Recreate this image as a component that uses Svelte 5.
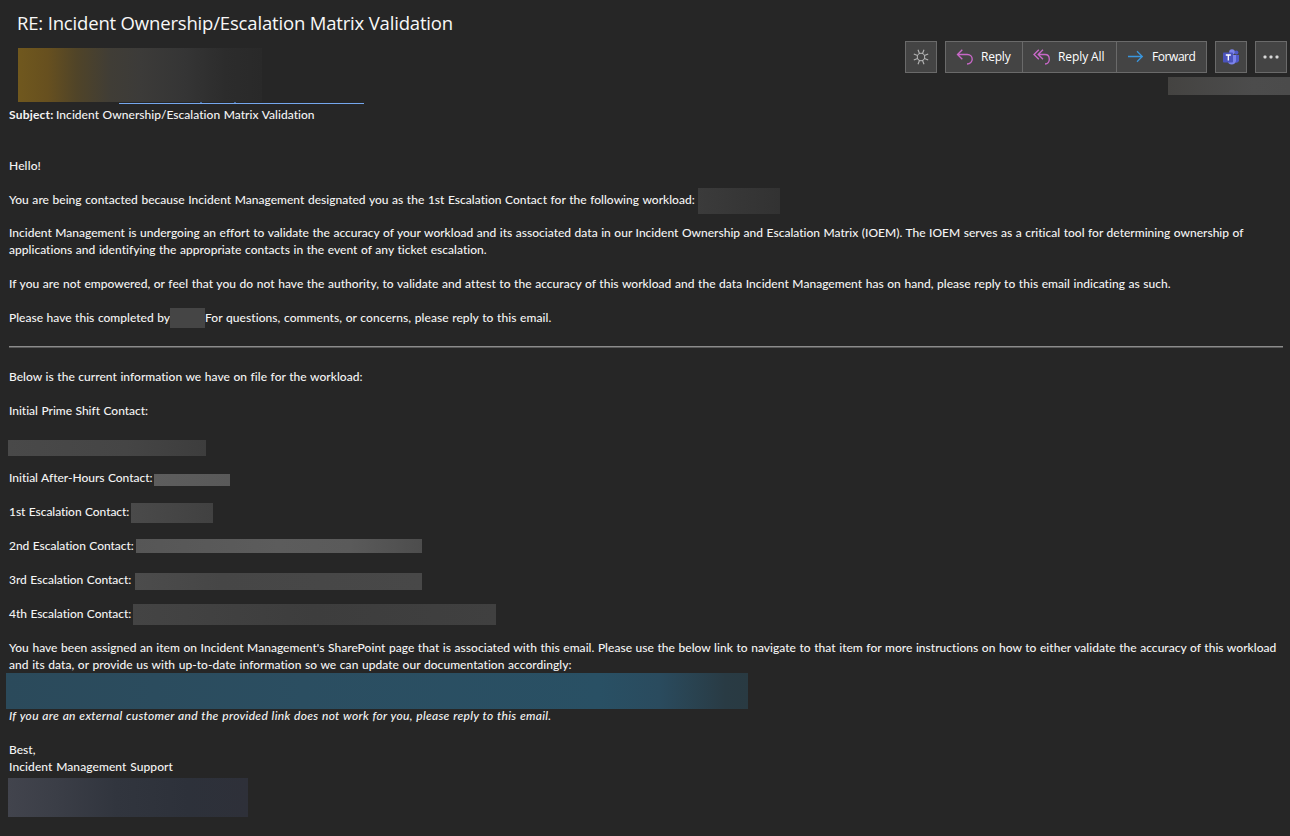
<script>
  const contacts = [
    { label: 'Initial After-Hours Contact:', w: 143.5, bar: 'b-after' },
    { label: '1st Escalation Contact:', w: 120.5, bar: 'b-first' },
    { label: '2nd Escalation Contact:', w: 125, bar: 'b-second' },
    { label: '3rd Escalation Contact:', w: 122.5, bar: 'b-third' },
    { label: '4th Escalation Contact:', w: 122.5, bar: 'b-fourth' }
  ];

  // Spreads the letters of a line so that it takes the given width.
  function fit(node, width) {
    const natural = node.getBoundingClientRect().width;
    node.style.letterSpacing = (width - natural) / node.textContent.length + 'px';
  }
</script>

<div class="mail">
  <header>
    <h1><span class="t" use:fit={436}>RE: Incident Ownership/Escalation Matrix Validation</span></h1>
    <div class="head">
      <div class="sender">
        <div class="person"></div>
        <div class="link"><i></i><i></i></div>
      </div>
      <div class="side">
        <div class="tools">
          <button class="sq" aria-label="Light mode">
            <svg width="18" height="18" viewBox="0 0 18 18" fill="none" stroke="#b4b4b4" stroke-width="1.1">
              <circle cx="9" cy="9" r="3.7" />
              <path d="M12.5 10.5l3.7 1.5M10.5 12.5l1.5 3.7M7.5 12.5L6 16.2M5.5 10.5L1.8 12M5.5 7.5L1.8 6M7.5 5.5L6 1.8M10.5 5.5L12 1.8M12.5 7.5L16.2 6" />
            </svg>
          </button>
          <div class="group">
            <button class="reply">
              <svg width="18" height="17" viewBox="0 0 18 17" fill="none" stroke="#c868c8" stroke-width="1.35">
                <path d="M6.3 .7L1.5 5.5L6.3 10.3M1.5 5.5H11.3C14.5 5.5 16.2 7.8 16.2 10.2S14.2 15 11 15" />
              </svg>
              <span class="t" use:fit={29.5}>Reply</span>
            </button>
            <button class="all">
              <svg width="18" height="17" viewBox="0 0 18 17" fill="none" stroke="#c868c8" stroke-width="1.35">
                <path d="M5.8 .7L1 5.5L5.8 10.3M10 .7L5.2 5.5L10 10.3M5.2 5.5H12C15 5.5 16.3 7.8 16.3 10.2S14.8 15 12 15" />
              </svg>
              <span class="t" use:fit={46.5}>Reply All</span>
            </button>
            <button class="fwd">
              <svg width="17" height="14" viewBox="0 0 17 14" fill="none" stroke="#3a96dd" stroke-width="1.3">
                <path d="M1 6.5H15.5M10 1.3L15.3 6.5L10 11.7" />
              </svg>
              <span class="t" use:fit={43.5}>Forward</span>
            </button>
          </div>
          <button class="sq" aria-label="Teams">
            <svg width="18" height="17" viewBox="0 0 18 17">
              <circle cx="14.4" cy="3.5" r="2" fill="#5059c9" />
              <path d="M11.5 6H17v5.2a2.9 2.9 0 0 1-5.5 1z" fill="#5059c9" />
              <circle cx="10" cy="3" r="2.8" fill="#7b83eb" />
              <path d="M5.5 6H14v5.8a4.3 4.3 0 0 1-8.5 0z" fill="#7b83eb" />
              <rect x="1" y="3.5" width="10" height="10" rx=".8" fill="#4b53bc" />
              <path d="M3.8 6H8.8M6.3 6V11.5" stroke="#fff" stroke-width="1.3" />
            </svg>
          </button>
          <button class="sq more" aria-label="More">
            <svg width="16" height="4" viewBox="0 0 16 4" fill="#d8d8d8">
              <rect x=".5" y=".5" width="3" height="3" rx="1" /><rect x="6.5" y=".5" width="3" height="3" rx="1" /><rect x="12.5" y=".5" width="3" height="3" rx="1" />
            </svg>
          </button>
        </div>
        <div class="date"></div>
      </div>
    </div>
  </header>

  <main>
    <p class="subject"><b class="t" use:fit={44.5}>Subject:</b><span class="t" use:fit={259}>Incident Ownership/Escalation Matrix Validation</span></p>
    <p class="hello"><span class="t" use:fit={32}>Hello!</span></p>
    <p class="gap"><span class="t" use:fit={686}>You are being contacted because Incident Management designated you as the 1st Escalation Contact for the following workload:</span><i class="bar b-work"></i></p>
    <p class="under"><span class="t" use:fit={1234.5}>Incident Management is undergoing an effort to validate the accuracy of your workload and its associated data in our Incident Ownership and Escalation Matrix (IOEM). The IOEM serves as a critical tool for determining ownership of</span></p>
    <p><span class="t" use:fit={478.5}>applications and identifying the appropriate contacts in the event of any ticket escalation.</span></p>
    <p class="gap"><span class="t" use:fit={1161.5}>If you are not empowered, or feel that you do not have the authority, to validate and attest to the accuracy of this workload and the data Incident Management has on hand, please reply to this email indicating as such.</span></p>
    <p class="gap"><span class="t" use:fit={161}>Please have this completed by</span><i class="bar b-by"></i><span class="t" use:fit={346.5}>For questions, comments, or concerns, please reply to this email.</span></p>
    <hr />
    <p><span class="t" use:fit={353.5}>Below is the current information we have on file for the workload:</span></p>
    <p class="gap"><span class="t" use:fit={139}>Initial Prime Shift Contact:</span></p>
    <div class="bar b-prime"></div>
    {#each contacts as c}
      <p class="contact"><span class="t" use:fit={c.w}>{c.label}</span><i class="bar {c.bar}"></i></p>
    {/each}
    <p><span class="t" use:fit={1267.5}>You have been assigned an item on Incident Management's SharePoint page that is associated with this email. Please use the below link to navigate to that item for more instructions on how to either validate the accuracy of this workload</span></p>
    <p><span class="t" use:fit={563}>and its data, or provide us with up-to-date information so we can update our documentation accordingly:</span></p>
    <div class="bar b-link"></div>
    <p class="note"><em class="t" use:fit={542.5}>If you are an external customer and the provided link does not work for you, please reply to this email.</em></p>
    <p class="gap"><span class="t" use:fit={26.5}>Best,</span></p>
    <p><span class="t" use:fit={164}>Incident Management Support</span></p>
    <div class="bar b-sign"></div>
  </main>
</div>

<style>
  :global(body) { margin: 0; background: #262626; }
  .mail {
    height: 836px;
    overflow: hidden;
    background: #262626;
    color: #f4f4f4;
    font: 500 12px/17px Lato, "Liberation Sans", sans-serif;
  }
  .t { display: inline-block; white-space: pre; flex: none; }
  header { height: 106px; font-family: "Open Sans", "Noto Sans", sans-serif; }
  h1 {
    margin: 0;
    padding: 9px 0 0 17px;
    font-size: 18.5px;
    line-height: 28px;
    font-weight: 400;
    color: #f8f8f8;
  }
  .head { display: flex; justify-content: space-between; padding-top: 4px; }
  .sender { padding: 7px 0 0 18px; }
  .person {
    width: 244px;
    height: 54px;
    background: linear-gradient(90deg, #70581e 0, #67501f 12%, #504428 24%, #403d36 38%, #3c3b39 50%, #353535 68%, #2c2c2c 85%, #292929 100%);
  }
  .link { display: flex; gap: 32px; width: 245px; height: 1px; margin: 1px 0 0 101px; background: #75a7ee; }
  .link i { width: 2px; height: 1px; margin-top: -1px; background: #47699b; }
  .link i:first-child { margin-left: 81px; }
  .side { display: flex; flex-direction: column; align-items: flex-end; gap: 4px; }
  .tools { display: flex; gap: 8px; padding-right: 3px; }
  button {
    display: flex;
    align-items: center;
    box-sizing: border-box;
    height: 32px;
    padding: 0;
    border: 1px solid #6a6a6a;
    background: #444;
    color: #fff;
    font: 12px/30px "Open Sans", "Noto Sans", sans-serif;
  }
  .sq { width: 32px; justify-content: center; }
  .more { padding-right: 1px; padding-bottom: 1px; }
  .group { display: flex; }
  .group button + button { border-left: 0; }
  .reply { width: 78px; padding-left: 10px; gap: 7px; }
  .all { width: 94px; padding-left: 10px; gap: 7px; }
  .fwd { width: 90px; padding-left: 10px; gap: 8px; }
  .date { width: 122px; height: 18px; background: linear-gradient(90deg, #444341, #4c4c4c 70%, #4b4b4b); }

  main { padding: 0 7px 0 9px; word-spacing: .5px; }
  p { display: flex; height: 17px; margin: 0; }
  .subject { gap: 2.5px; }
  .hello { margin-top: 34px; }
  .gap { margin-top: 17px; }
  .under { margin-top: 16px; }
  hr { height: 1px; margin: 20px 0 20px; border: 0; border-top: 1px solid #8b8b8b; background: #585858; }
  .contact { margin-bottom: 17px; }
  .bar { display: block; flex: none; }
  .b-work { width: 82px; height: 26px; margin: -3px 0 0 3px; background: linear-gradient(90deg, #3b3b3b, #323232); }
  .b-by { width: 35px; height: 20px; margin-top: -1px; background: #454545; }
  .b-prime { width: 198px; height: 16px; margin: 21px 0 13px -1px; background: linear-gradient(90deg, #494949, #454545 60%, #3d3d3d); }
  .b-after { width: 76px; height: 12px; margin: 5px 0 0 1.5px; background: linear-gradient(90deg, #5d5d5d, #595959); }
  .b-first { width: 82px; height: 20px; margin-left: 1.5px; background: linear-gradient(90deg, #4a4a4a, #414141); }
  .b-second { width: 286px; height: 14px; margin: 2px 0 0 2px; background: linear-gradient(90deg, #565656, #5c5c5c 50%, #5a5a5a 75%, #4d4d4d); }
  .b-third { width: 287px; height: 17px; margin: 2px 0 0 3.5px; background: linear-gradient(90deg, #4c4c4c, #464646 30%, #484848); }
  .b-fourth { width: 363px; height: 21px; margin: -1px 0 0 1.5px; background: linear-gradient(90deg, #444, #3d3d3d 50%, #404040); }
  .b-link { width: 742px; height: 36px; margin-left: -3px; background: linear-gradient(90deg, #2b4a5b, #2b4e61 40%, #295064 80%, #2a4b5e 88%, #293b44 97%, #293a42); }
  .note { margin-top: -2px; }
  .b-sign { width: 240px; height: 39px; margin: 3px 0 0 -1px; background: linear-gradient(90deg, #42444d, #3b3e47 20%, #31353e 45%, #2d313a 75%, #2e3039); }
</style>
